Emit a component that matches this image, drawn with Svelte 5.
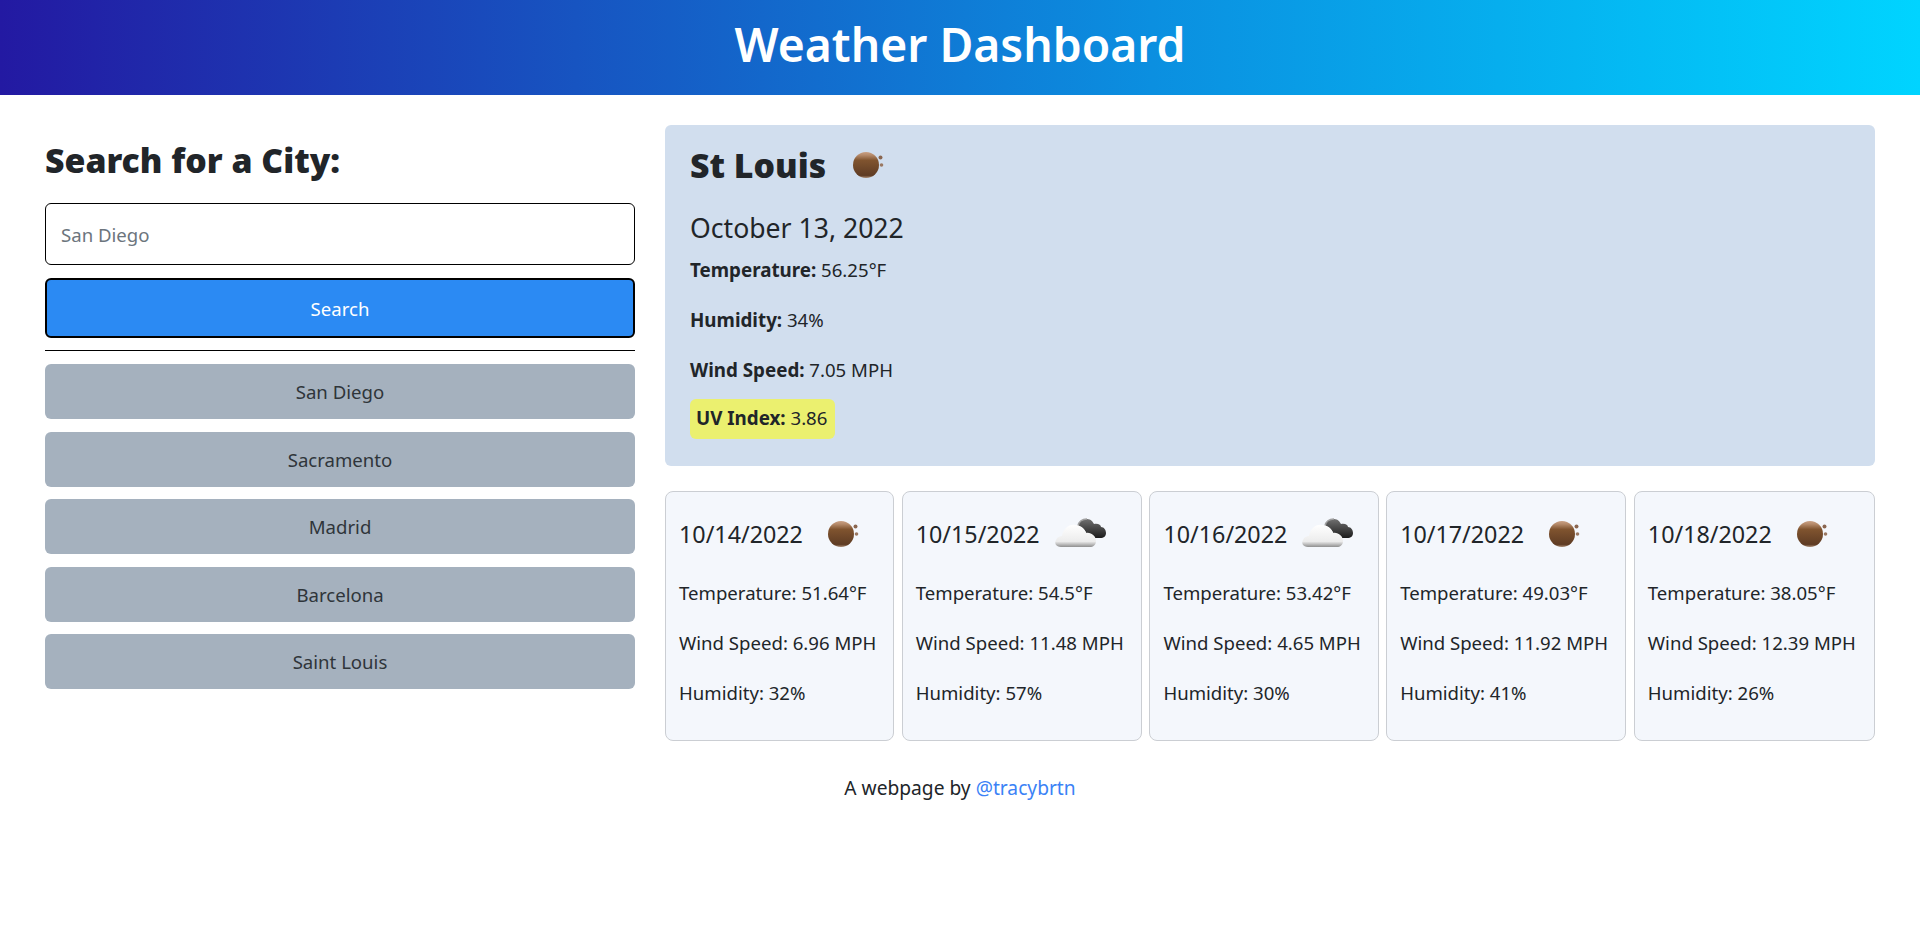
<script lang="ts">
	const cities = ['San Diego', 'Sacramento', 'Madrid', 'Barcelona', 'Saint Louis'];

	const forecast = [
		{ date: '10/14/2022', icon: 'clear', temp: '51.64', wind: '6.96', humidity: '32' },
		{ date: '10/15/2022', icon: 'cloud', temp: '54.5', wind: '11.48', humidity: '57' },
		{ date: '10/16/2022', icon: 'cloud', temp: '53.42', wind: '4.65', humidity: '30' },
		{ date: '10/17/2022', icon: 'clear', temp: '49.03', wind: '11.92', humidity: '41' },
		{ date: '10/18/2022', icon: 'clear', temp: '38.05', wind: '12.39', humidity: '26' }
	];
</script>

{#snippet clearIcon()}
	<svg class="icon" width="60" height="40" viewBox="0 0 60 40" aria-hidden="true">
		<circle cx="23" cy="20" r="13" fill="url(#ball)" />
		<circle cx="37.5" cy="12.5" r="2" fill="#8a6650" />
		<circle cx="38.5" cy="20" r="1.8" fill="#9a7862" />
	</svg>
{/snippet}

{#snippet cloudIcon()}
	<svg class="icon cloud" width="60" height="40" viewBox="0 0 60 40" aria-hidden="true">
		<path
			d="M24 12 C25 7 29 5 33 5 C37 5 39 8 40 10 C44 9 47 11 47 13 C50 13 52 16 52 19 C52 22 50 24 46 24 L34 24 C33 18 29 13 24 12 Z"
			fill="url(#darkCloud)"
		/>
		<path d="M24 12 C25 7 29 5 33 5" fill="none" stroke="#a0a0a0" stroke-width="1.5" />
		<path
			d="M7 33 C2 33 0 29 2 26 C3 23 6 22 8 22 C9 15 15 10 21 11 C27 11 31 15 32 19 C37 18 42 22 42 27 C42 31 39 33 36 33 Z"
			fill="url(#whiteCloud)"
		/>
	</svg>
{/snippet}

<svg class="defs" width="0" height="0" aria-hidden="true">
	<defs>
		<linearGradient id="ball" x1="0" y1="0" x2="0" y2="1">
			<stop offset="0" stop-color="#c9a084" />
			<stop offset="0.12" stop-color="#b58a6a" />
			<stop offset="0.32" stop-color="#80542f" />
			<stop offset="0.9" stop-color="#5f3c24" />
			<stop offset="1" stop-color="#a98a72" />
		</linearGradient>
		<linearGradient id="darkCloud" x1="0" y1="0" x2="0" y2="1">
			<stop offset="0" stop-color="#707070" />
			<stop offset="1" stop-color="#1c1c1c" />
		</linearGradient>
		<linearGradient id="whiteCloud" x1="0" y1="0" x2="0" y2="1">
			<stop offset="0" stop-color="#ffffff" />
			<stop offset="0.75" stop-color="#ececec" />
			<stop offset="1" stop-color="#8f8f8f" />
		</linearGradient>
	</defs>
</svg>

<header class="banner">
	<h1>Weather Dashboard</h1>
</header>

<main class="layout">
	<aside class="search">
		<h2>Search for a City:</h2>
		<input type="text" placeholder="San Diego" />
		<button type="button" class="search-btn">Search</button>
		<hr />
		<div class="history">
			{#each cities as city (city)}
				<button type="button" class="city-btn">{city}</button>
			{/each}
		</div>
	</aside>

	<section class="results">
		<div class="today">
			<div class="today-title">
				<h2>St Louis</h2>
				{@render clearIcon()}
			</div>
			<h3>October 13, 2022</h3>
			<p><strong>Temperature:</strong> 56.25°F</p>
			<p><strong>Humidity:</strong> 34%</p>
			<p class="wind"><strong>Wind Speed:</strong> 7.05 MPH</p>
			<p class="uv"><strong>UV Index:</strong> 3.86</p>
		</div>

		<div class="forecast">
			{#each forecast as day (day.date)}
				<article class="day">
					<div class="day-title">
						<h4>{day.date}</h4>
						{#if day.icon === 'clear'}
							{@render clearIcon()}
						{:else}
							{@render cloudIcon()}
						{/if}
					</div>
					<p>Temperature: {day.temp}°F</p>
					<p>Wind Speed: {day.wind} MPH</p>
					<p>Humidity: {day.humidity}%</p>
				</article>
			{/each}
		</div>
	</section>
</main>

<footer class="credit">
	A webpage by <a href="#top">@tracybrtn</a>
</footer>

<style>
	:global(body) {
		background: #fff;
		color: #212529;
		font-family: 'Noto Sans', 'Open Sans', sans-serif;
		font-size: 18.6px;
		line-height: 27px;
	}

	.defs {
		position: absolute;
	}

	h1,
	h2,
	h3,
	h4,
	p {
		margin: 0;
	}

	.banner {
		height: 95px;
		display: flex;
		align-items: center;
		justify-content: center;
		background: linear-gradient(90deg, #2319a2 0%, #0b8fe0 60%, #00d4ff 100%);
	}

	.banner h1 {
		color: #fff;
		font-size: 46.3px;
		font-weight: 600;
		line-height: 1;
		padding-bottom: 4px;
	}

	.layout {
		display: grid;
		grid-template-columns: 590px 1210px;
		gap: 30px;
		padding: 30px 45px 0;
	}

	.search h2 {
		font-size: 33.8px;
		font-weight: 900;
		line-height: 38px;
		margin-top: 16px;
		margin-bottom: 24px;
	}

	.search input {
		display: block;
		box-sizing: border-box;
		width: 100%;
		height: 62px;
		padding: 0 15px;
		border: 1px solid #000;
		border-radius: 6px;
		font: inherit;
		outline: none;
	}

	.search input::placeholder {
		color: #6c757d;
	}

	.search-btn {
		display: block;
		box-sizing: border-box;
		width: 100%;
		height: 60px;
		margin-top: 13px;
		background: #2b8af3;
		border: 2px solid #000;
		border-radius: 6px;
		color: #fff;
		font: inherit;
	}

	.search hr {
		margin: 12px 0 13px;
		border: 0;
		border-top: 1px solid #000;
	}

	.history {
		display: flex;
		flex-direction: column;
		gap: 12.5px;
	}

	.city-btn {
		height: 55px;
		background: #a5b1be;
		border: 0;
		border-radius: 6px;
		color: #2f353a;
		font: inherit;
	}

	.today {
		box-sizing: border-box;
		height: 341px;
		padding: 15px 25px 0;
		background: #d1deee;
		border-radius: 6px;
	}

	.today-title {
		display: flex;
		align-items: center;
		height: 50px;
	}

	.today-title h2 {
		font-size: 33.8px;
		font-weight: 900;
		margin-right: 17px;
	}

	.today h3 {
		font-size: 26.6px;
		font-weight: 400;
		line-height: 32px;
		margin: 22px 0 12px;
	}

	.today p {
		margin-bottom: 23px;
	}

	.today .wind {
		margin-bottom: 16px;
	}

	.today strong {
		font-size: 18.8px;
		line-height: 1;
	}

	.today .uv {
		width: fit-content;
		padding: 5px 8px 8px 6px;
		margin-bottom: 0;
		background: #ebf06f;
		border-radius: 6px;
	}

	.forecast {
		display: grid;
		grid-template-columns: 230fr 241fr 230fr 241fr 242fr;
		gap: 7.5px;
		margin-top: 25px;
	}

	.day {
		box-sizing: border-box;
		height: 250px;
		padding: 22px 13px 0;
		background: #f4f7fc;
		border: 1px solid #cbced3;
		border-radius: 8px;
	}

	.day-title {
		display: flex;
		align-items: center;
		height: 40px;
		margin-bottom: 25px;
	}

	.day-title h4 {
		font-size: 23.3px;
		font-weight: 400;
		margin-right: 15px;
		white-space: nowrap;
	}

	.day .cloud {
		margin-left: -1px;
	}

	.day p {
		margin-bottom: 23px;
		white-space: nowrap;
	}

	.credit {
		margin-top: 33px;
		font-size: 19.2px;
		text-align: center;
	}

	.credit a {
		color: #3b82f6;
		text-decoration: none;
	}
</style>
